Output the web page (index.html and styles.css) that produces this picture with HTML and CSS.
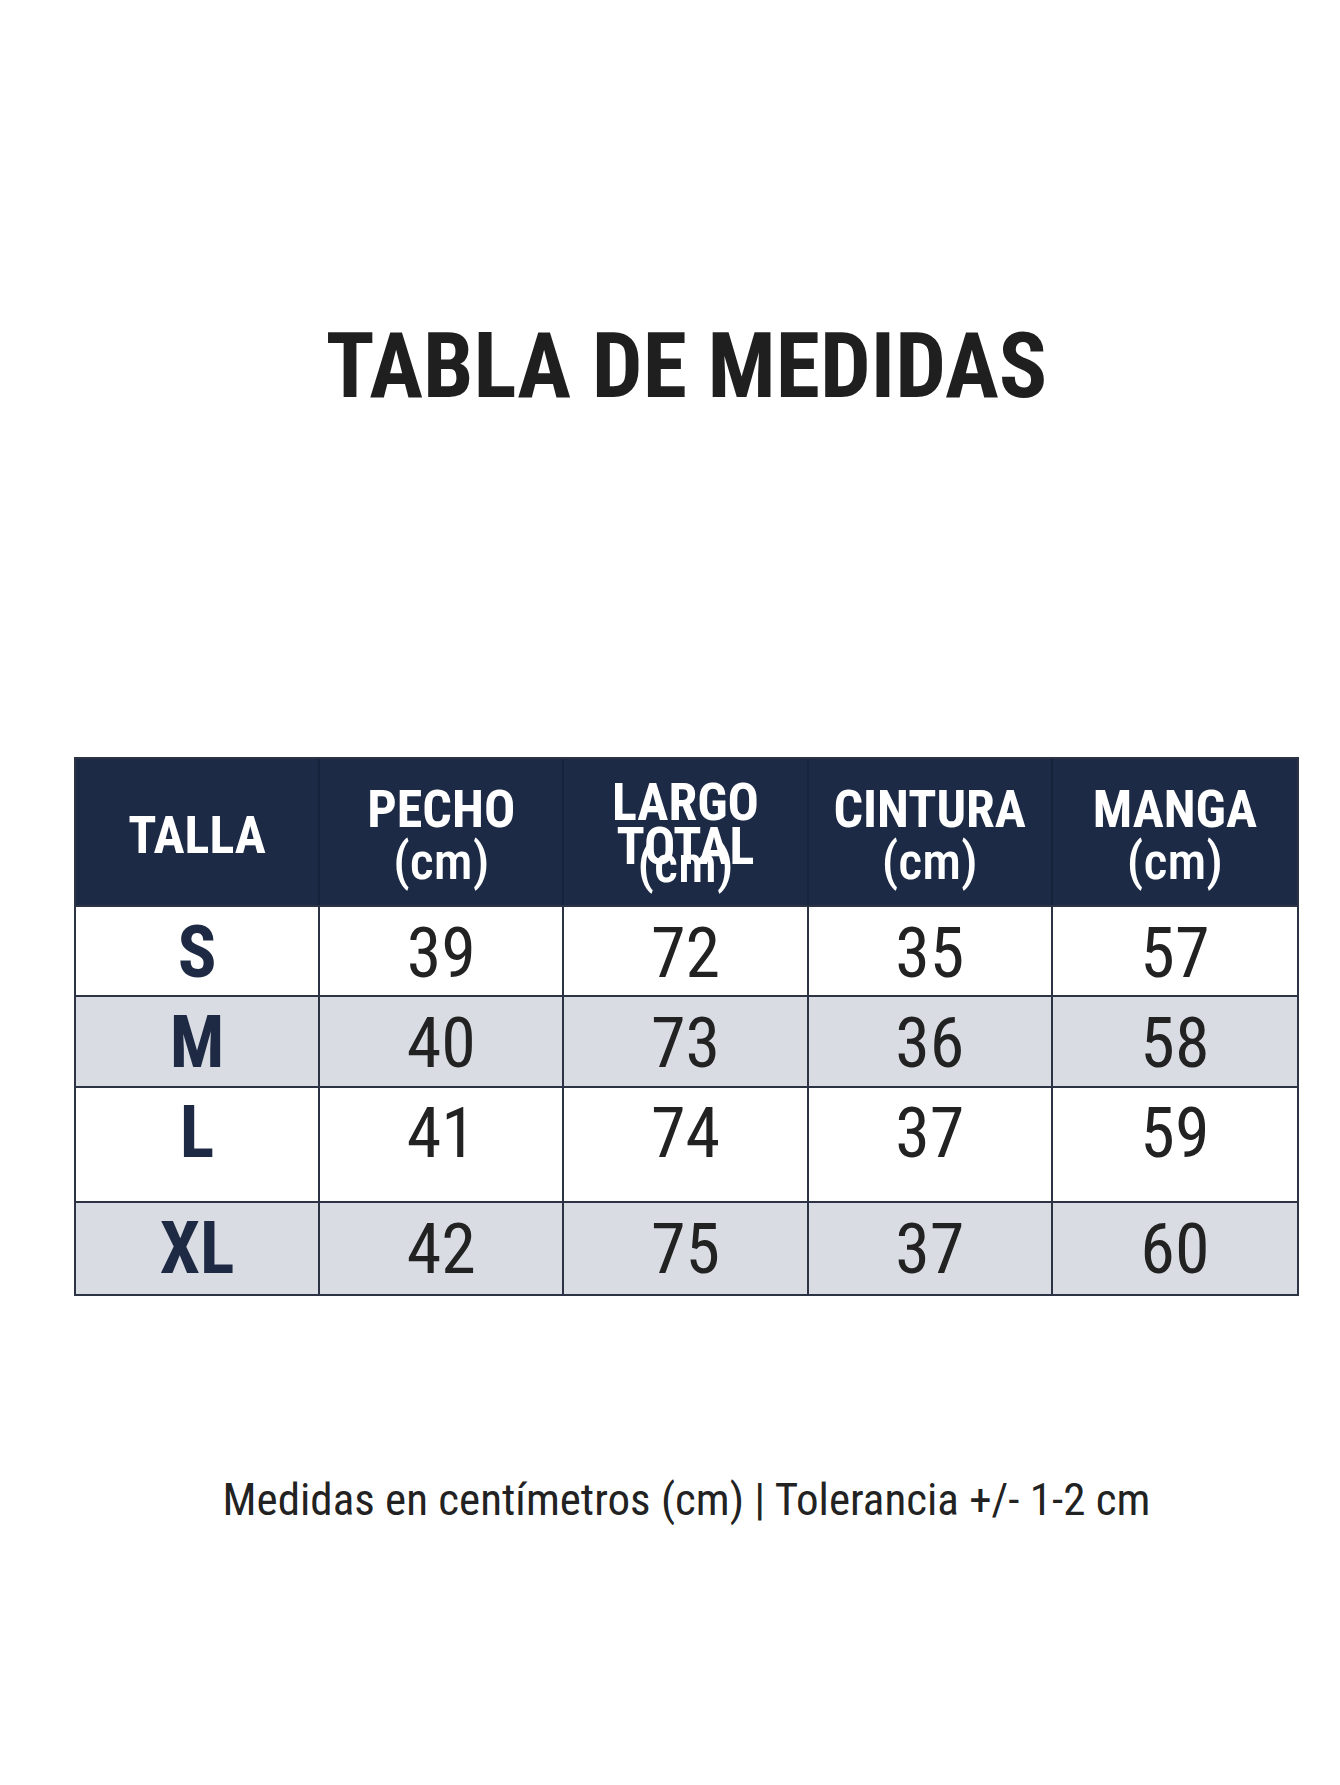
FILE: index.html
```html
<!DOCTYPE html>
<html lang="es">
<head>
<meta charset="utf-8">
<title>Tabla de medidas</title>
<link rel="stylesheet" href="styles.css">
</head>
<body>
<main class="page">
  <h1 class="title">TABLA DE MEDIDAS</h1>
  <div class="table">
    <div class="row head">
      <div class="cell"><span class="h-main">TALLA</span></div>
      <div class="cell"><span class="h-main">PECHO</span><span class="h-unit">(cm)</span></div>
      <div class="cell largo"><span class="h-main">LARGO<br>TOTAL</span><span class="h-unit">(cm)</span></div>
      <div class="cell"><span class="h-main">CINTURA</span><span class="h-unit">(cm)</span></div>
      <div class="cell"><span class="h-main">MANGA</span><span class="h-unit">(cm)</span></div>
    </div>
    <div class="row r-s">
      <div class="cell size">S</div>
      <div class="cell num">39</div>
      <div class="cell num">72</div>
      <div class="cell num">35</div>
      <div class="cell num">57</div>
    </div>
    <div class="row alt r-m">
      <div class="cell size">M</div>
      <div class="cell num">40</div>
      <div class="cell num">73</div>
      <div class="cell num">36</div>
      <div class="cell num">58</div>
    </div>
    <div class="row r-l">
      <div class="cell size">L</div>
      <div class="cell num">41</div>
      <div class="cell num">74</div>
      <div class="cell num">37</div>
      <div class="cell num">59</div>
    </div>
    <div class="row alt r-xl">
      <div class="cell size">XL</div>
      <div class="cell num">42</div>
      <div class="cell num">75</div>
      <div class="cell num">37</div>
      <div class="cell num">60</div>
    </div>
  </div>
  <p class="note">Medidas en centímetros (cm) | Tolerancia +/- 1-2 cm</p>
</main>
</body>
</html>
```

FILE: styles.css
```css
html, body {
  margin: 0;
  padding: 0;
  background: #ffffff;
}

.page {
  width: 1340px;
  min-height: 1785px;
  box-sizing: border-box;
  padding: 0 41px 0 74px;
  display: flex;
  flex-direction: column;
  font-family: "Roboto Condensed", Roboto, "Liberation Sans", sans-serif;
}

.title {
  margin: 321px 0 0 0;
  font-size: 90px;
  line-height: 91px;
  font-weight: 700;
  color: #1f1f1f;
  text-align: center;
  letter-spacing: 0;
}

.table {
  margin-top: 345px;
  border: 2px solid #2b3344;
  display: flex;
  flex-direction: column;
}

.row {
  display: grid;
  grid-template-columns: repeat(5, 1fr);
  border-bottom: 2px solid #2b3344;
  box-sizing: border-box;
}

.row:last-child {
  border-bottom: none;
}

.cell {
  border-right: 2px solid #2b3344;
  display: flex;
  flex-direction: column;
  align-items: center;
  justify-content: center;
  box-sizing: border-box;
}

.cell:last-child {
  border-right: none;
}

.head {
  background: #1c2a45;
  height: 148px;
  color: #ffffff;
}

.head .cell {
  border-right-color: #17233a;
  padding-top: 8px;
  font-weight: 700;
  font-size: 52px;
  line-height: 52px;
  text-align: center;
}

.h-main, .h-unit {
  display: block;
}

.h-unit {
  font-weight: 500;
}

.largo .h-main {
  line-height: 44px;
}

.largo .h-unit {
  margin-top: -30px;
}

.r-s { height: 90px; }
.r-m { height: 91px; }
.r-l { height: 115px; }
.r-xl { height: 91px; }

.r-s .cell, .r-m .cell {
  padding-top: 3px;
}

.r-l .cell {
  padding-bottom: 23px;
}

.alt {
  background: #d9dde3;
}

.size {
  font-size: 72px;
  font-weight: 700;
  color: #1e2a44;
  line-height: 1;
}

.num {
  font-size: 70px;
  font-weight: 400;
  color: #222222;
  line-height: 1;
}

.note {
  margin: 181px 0 0 0;
  font-size: 45px;
  line-height: 46px;
  color: #222222;
  text-align: center;
}
```
